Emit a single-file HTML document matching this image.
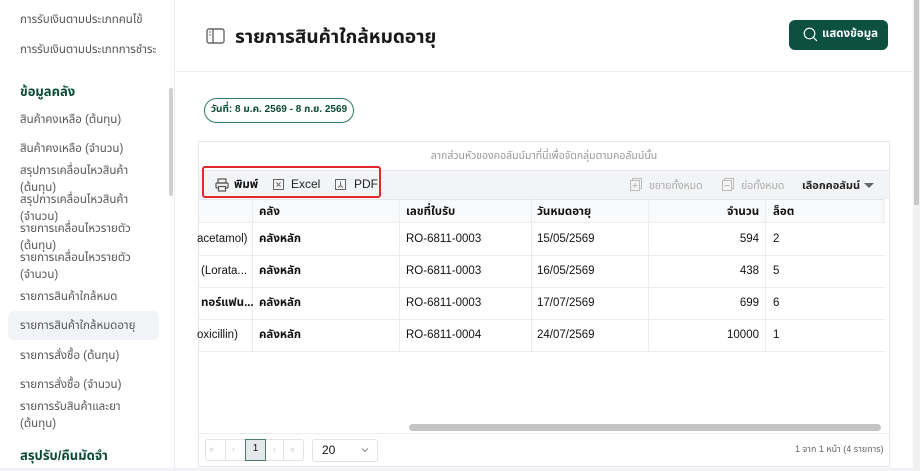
<!DOCTYPE html>
<html><head><meta charset="utf-8"><style>
*{box-sizing:border-box;margin:0;padding:0}
body{width:920px;height:471px;overflow:hidden;background:#fff;font-family:"Liberation Sans","Noto Sans CJK SC","Noto Sans Thai",sans-serif;color:#111;position:relative}
.a{position:absolute;white-space:nowrap}
.side{position:absolute;left:0;top:0;width:175px;height:471px;border-right:1px solid #e8eaed;background:#fff}
.si{position:absolute;left:20px;font-size:11.5px;color:#555;white-space:nowrap}
.sh{position:absolute;left:20px;font-size:13px;font-weight:bold;color:#0b4a36}
.grid{position:absolute;left:198px;top:141px;width:692px;height:326px;border:1px solid #e5e7eb}
.cell{position:absolute;font-size:11.5px;white-space:nowrap}
.b{font-weight:bold;margin-top:-1px}
.r{margin-top:1px}
.vl{position:absolute;width:1px;background:#ececec}
.hl{position:absolute;left:0;height:1px;background:#ececec}
</style></head><body>
<div class="side">
<div class="si" style="top:12px">การรับเงินตามประเภทคนไข้</div>
<div class="si" style="top:42px">การรับเงินตามประเภทการชำระ</div>
<div class="sh" style="top:82px">ข้อมูลคลัง</div>
<div class="si" style="top:112px">สินค้าคงเหลือ (ต้นทุน)</div>
<div class="si" style="top:141px">สินค้าคงเหลือ (จำนวน)</div>
<div class="si" style="top:163px">สรุปการเคลื่อนไหวสินค้า</div>
<div class="si" style="top:180px">(ต้นทุน)</div>
<div class="si" style="top:192px">สรุปการเคลื่อนไหวสินค้า</div>
<div class="si" style="top:209px">(จำนวน)</div>
<div class="si" style="top:221px">รายการเคลื่อนไหวรายตัว</div>
<div class="si" style="top:238px">(ต้นทุน)</div>
<div class="si" style="top:250px">รายการเคลื่อนไหวรายตัว</div>
<div class="si" style="top:267px">(จำนวน)</div>
<div class="si" style="top:289px">รายการสินค้าใกล้หมด</div>
<div style="position:absolute;left:8px;top:311px;width:151px;height:29px;background:#f1f3f6;border-radius:6px"></div>
<div class="si" style="top:318px">รายการสินค้าใกล้หมดอายุ</div>
<div class="si" style="top:348px">รายการสั่งซื้อ (ต้นทุน)</div>
<div class="si" style="top:377px">รายการสั่งซื้อ (จำนวน)</div>
<div class="si" style="top:399px">รายการรับสินค้าและยา</div>
<div class="si" style="top:416px">(ต้นทุน)</div>
<div class="sh" style="top:446px">สรุปรับ/คืนมัดจำ</div>
<div style="position:absolute;left:169px;top:88px;width:4px;height:108px;background:#d0d0d0;border-radius:2px"></div>
</div>
<div style="position:absolute;left:913px;top:0;width:7px;height:471px;background:#f1f1f1"></div>
<div style="position:absolute;left:914px;top:0;width:5px;height:205px;background:#c8c8c8"></div>
<div style="position:absolute;left:175px;top:71px;width:738px;height:1px;background:#ebedf0"></div>
<div style="position:absolute;left:0;top:468px;width:913px;height:3px;background:#f0f2f5"></div>
<svg class="a" style="left:206px;top:28px" width="19" height="16" viewBox="0 0 19 16"><rect x="1" y="1" width="17" height="14" rx="2" fill="none" stroke="#666" stroke-width="1.4"/><line x1="7" y1="1" x2="7" y2="15" stroke="#666" stroke-width="1.4"/><line x1="3" y1="4" x2="5" y2="4" stroke="#666"/><line x1="3" y1="7" x2="5" y2="7" stroke="#666"/></svg>
<div class="a" style="left:235px;top:23px;font-size:19px;font-weight:bold;color:#1a1a1a">รายการสินค้าใกล้หมดอายุ</div>
<div class="a" style="left:789px;top:20px;width:99px;height:30px;background:#0b5040;border-radius:6px"></div>
<svg class="a" style="left:803px;top:27px" width="15" height="15" viewBox="0 0 15 15"><circle cx="6.5" cy="6.5" r="5.3" fill="none" stroke="#fff" stroke-width="1.2"/><line x1="10.3" y1="10.3" x2="14" y2="14" stroke="#fff" stroke-width="1.2"/></svg>
<div class="a" style="left:822px;top:26px;font-size:11.5px;font-weight:bold;color:#fff">แสดงข้อมูล</div>
<div class="a" style="left:204px;top:98px;width:150px;height:25px;border:1.3px solid #2f7a63;border-radius:13px;font-size:10px;font-weight:bold;color:#0b4a36;text-align:center;line-height:21px">วันที่: 8 ม.ค. 2569 - 8 ก.ย. 2569</div>
<div class="grid">
<div class="a" style="left:0;top:0;width:690px;height:28px;text-align:center;font-size:10.5px;color:#999;line-height:28px">ลากส่วนหัวของคอลัมน์มาที่นี่เพื่อจัดกลุ่มตามคอลัมน์นั้น</div>
<div class="a" style="left:0;top:28px;width:690px;height:29px;background:#f3f4f6;border-top:1px solid #e5e7eb"></div>
<svg class="a" style="left:16px;top:36px" width="14" height="14" viewBox="0 0 14 14"><rect x="3" y="1" width="8" height="4" fill="none" stroke="#555" stroke-width="1.2"/><rect x="1" y="5" width="12" height="5" rx="1" fill="none" stroke="#555" stroke-width="1.2"/><rect x="3.5" y="8.5" width="7" height="4.5" fill="#f3f4f6" stroke="#555" stroke-width="1.2"/></svg>
<div class="a" style="left:35px;top:35px;font-size:11.5px;font-weight:bold">พิมพ์</div>
<svg class="a" style="left:74px;top:37px" width="11" height="11" viewBox="0 0 11 11"><rect x=".5" y=".5" width="10" height="10" fill="none" stroke="#666"/><path d="M3.5 3.5l4 4M7.5 3.5l-4 4" stroke="#666" stroke-width=".9"/></svg>
<div class="a" style="left:92px;top:35px;font-size:12px;color:#222">Excel</div>
<svg class="a" style="left:136px;top:37px" width="11" height="11" viewBox="0 0 11 11"><rect x=".5" y=".5" width="10" height="10" fill="none" stroke="#666"/><path d="M5.5 2.5v4L3 8.5M5.5 6.5L8 8.5" stroke="#666" stroke-width=".9" fill="none"/></svg>
<div class="a" style="left:155px;top:35px;font-size:12px;color:#222">PDF</div>
<svg class="a" style="left:431px;top:36px" width="12" height="13" viewBox="0 0 12 13"><rect x=".5" y="2.5" width="9" height="10" fill="none" stroke="#bbb"/><path d="M2.5 2.5V.5h9v10h-2" fill="none" stroke="#bbb"/><path d="M5 5v5M2.5 7.5h5" stroke="#bbb"/></svg>
<div class="a" style="left:450px;top:36px;font-size:10.5px;color:#aaa">ขยายทั้งหมด</div>
<svg class="a" style="left:523px;top:36px" width="12" height="13" viewBox="0 0 12 13"><rect x=".5" y="2.5" width="9" height="10" fill="none" stroke="#bbb"/><path d="M2.5 2.5V.5h9v10h-2" fill="none" stroke="#bbb"/><path d="M2.5 7.5h5" stroke="#bbb"/></svg>
<div class="a" style="left:542px;top:36px;font-size:10.5px;color:#aaa">ย่อทั้งหมด</div>
<div class="a" style="left:603px;top:35px;font-size:11px;font-weight:bold;color:#222">เลือกคอลัมน์</div>
<div class="a" style="left:665px;top:41px;width:0;height:0;border-left:5px solid transparent;border-right:5px solid transparent;border-top:5px solid #666"></div>
<div class="a" style="left:0;top:57px;width:686px;height:24px;background:#f9fafb;border-top:1px solid #e5e7eb;border-bottom:1px solid #ececec"></div>
<div class="vl" style="left:53px;top:57px;height:152px"></div>
<div class="vl" style="left:200px;top:57px;height:152px"></div>
<div class="vl" style="left:332px;top:57px;height:152px"></div>
<div class="vl" style="left:449px;top:57px;height:152px"></div>
<div class="vl" style="left:566px;top:57px;height:152px"></div>
<div class="vl" style="left:684px;top:57px;height:24px"></div>
<div class="cell" style="left:60px;top:62px;font-weight:bold">คลัง</div>
<div class="cell" style="left:207px;top:62px;font-weight:bold">เลขที่ใบรับ</div>
<div class="cell" style="left:338px;top:62px;font-weight:bold">วันหมดอายุ</div>
<div class="cell" style="left:528px;top:62px;font-weight:bold">จำนวน</div>
<div class="cell" style="left:574px;top:62px;font-weight:bold">ล็อต</div>
<div class="hl" style="top:113px;width:686px"></div>
<div class="hl" style="top:145px;width:686px"></div>
<div class="hl" style="top:177px;width:686px"></div>
<div class="hl" style="top:209px;width:686px"></div>
<div class="cell r" style="left:-2px;top:90px">acetamol)</div><div class="cell b" style="left:60px;top:90px">คลังหลัก</div><div class="cell r" style="left:207px;top:90px">RO-6811-0003</div><div class="cell r" style="left:338px;top:90px">15/05/2569</div><div class="cell r" style="left:500px;top:90px;width:60px;text-align:right">594</div><div class="cell r" style="left:574px;top:90px">2</div>
<div class="cell r" style="left:2px;top:122px">(Lorata...</div><div class="cell b" style="left:60px;top:122px">คลังหลัก</div><div class="cell r" style="left:207px;top:122px">RO-6811-0003</div><div class="cell r" style="left:338px;top:122px">16/05/2569</div><div class="cell r" style="left:500px;top:122px;width:60px;text-align:right">438</div><div class="cell r" style="left:574px;top:122px">5</div>
<div class="cell b" style="left:2px;top:154px">ทอร์แฟน...</div><div class="cell b" style="left:60px;top:154px">คลังหลัก</div><div class="cell r" style="left:207px;top:154px">RO-6811-0003</div><div class="cell r" style="left:338px;top:154px">17/07/2569</div><div class="cell r" style="left:500px;top:154px;width:60px;text-align:right">699</div><div class="cell r" style="left:574px;top:154px">6</div>
<div class="cell r" style="left:-2px;top:186px">oxicillin)</div><div class="cell b" style="left:60px;top:186px">คลังหลัก</div><div class="cell r" style="left:207px;top:186px">RO-6811-0004</div><div class="cell r" style="left:338px;top:186px">24/07/2569</div><div class="cell r" style="left:500px;top:186px;width:60px;text-align:right">10000</div><div class="cell r" style="left:574px;top:186px">1</div>
<div class="a" style="left:210px;top:282px;width:472px;height:7px;background:#c4c4c4;border-radius:4px"></div>
<div class="a" style="left:0;top:291px;width:690px;height:1px;background:#ececec"></div>
<div class="a" style="left:6px;top:297px;width:99px;height:22px;border:1px solid #e3e3e3;border-radius:3px"></div>
<div class="a" style="left:10px;top:302px;font-size:9px;color:#ccc">«</div>
<div class="a" style="left:26px;top:297px;width:1px;height:22px;background:#e3e3e3"></div>
<div class="a" style="left:33px;top:302px;font-size:9px;color:#ccc">‹</div>
<div class="a" style="left:46px;top:297px;width:21px;height:22px;background:#e5e7eb;border:1px solid #4c7b6c;font-size:10px;text-align:center;line-height:17px">1</div>
<div class="a" style="left:74px;top:302px;font-size:9px;color:#ccc">›</div>
<div class="a" style="left:84px;top:297px;width:1px;height:22px;background:#e3e3e3"></div>
<div class="a" style="left:91px;top:302px;font-size:9px;color:#ccc">»</div>
<div class="a" style="left:113px;top:297px;width:66px;height:23px;border:1px solid #e3e3e3;border-radius:3px"></div>
<div class="a" style="left:123px;top:301px;font-size:12px">20</div>
<svg class="a" style="left:162px;top:305px" width="8" height="6" viewBox="0 0 8 6"><path d="M1 1.5l3 3 3-3" stroke="#888" fill="none"/></svg>
<div class="a" style="left:596px;top:301px;font-size:9px;color:#666">1 จาก 1 หน้า (4 รายการ)</div>
</div>
<div class="a" style="left:202px;top:166px;width:179px;height:32px;border:2px solid #e0292f;border-radius:3px"></div>
</body></html>
